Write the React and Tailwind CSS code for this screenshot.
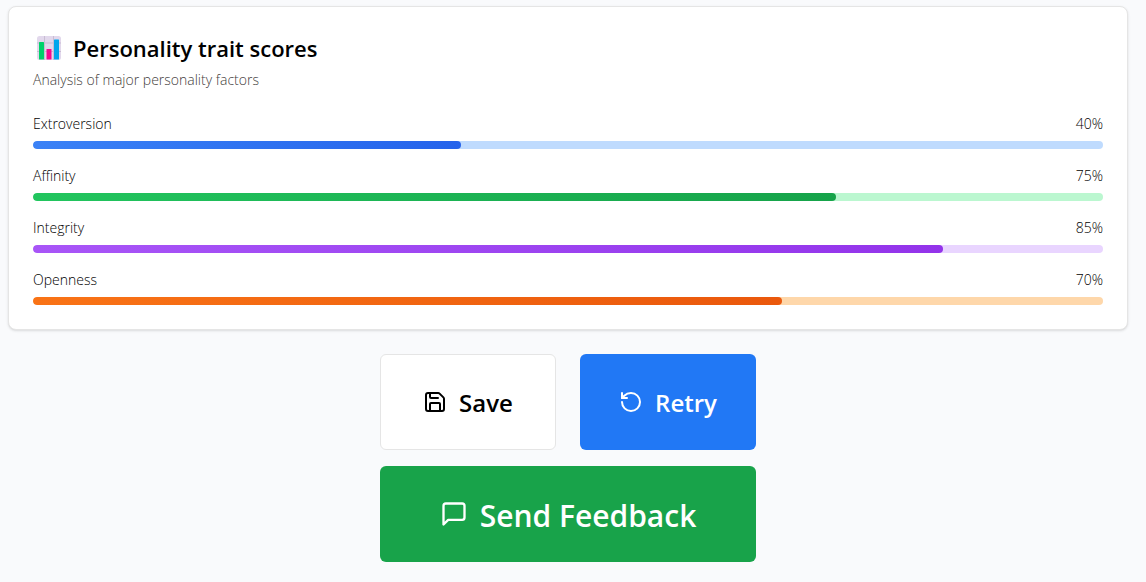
import { RotateCcw, Save } from "lucide-react";

const traits = [
  { name: "Extroversion", score: 40, track: "bg-[#bfdbfe]", fill: "bg-linear-to-r from-[#3b82f6] to-[#2563eb]" },
  { name: "Affinity", score: 75, track: "bg-[#bbf7d0]", fill: "bg-linear-to-r from-[#22c55e] to-[#16a34a]" },
  { name: "Integrity", score: 85, track: "bg-[#e9d5ff]", fill: "bg-linear-to-r from-[#a855f7] to-[#9333ea]" },
  { name: "Openness", score: 70, track: "bg-[#fed7aa]", fill: "bg-linear-to-r from-[#f97316] to-[#ea580c]" },
];

function ChartIcon() {
  return (
    <svg viewBox="0 0 24 24" className="size-6" aria-hidden="true">
      <rect width="24" height="24" rx="2.5" fill="#e2d8ec" />
      <path d="M7.5 0v24M16.5 0v24M0 7h24M0 15.5h24" stroke="#c8bdd3" strokeWidth="1" />
      <rect x="2" y="6" width="5" height="17.5" rx="0.5" fill="#00d26a" />
      <rect x="9.5" y="13" width="5" height="10.5" rx="0.5" fill="#f70a8d" />
      <rect x="17" y="3.5" width="5" height="20" rx="0.5" fill="#00a6ed" />
    </svg>
  );
}

function MessageIcon() {
  return (
    <svg
      viewBox="0 0 24 24"
      className="size-7"
      fill="none"
      stroke="currentColor"
      strokeWidth="2"
      strokeLinecap="round"
      strokeLinejoin="round"
      aria-hidden="true"
    >
      <path d="M21 15a2 2 0 0 1-2 2H7l-4 4V5a2 2 0 0 1 2-2h14a2 2 0 0 1 2 2z" />
    </svg>
  );
}

function TraitRow({ name, score, track, fill }) {
  return (
    <li className="flex flex-col gap-1.5">
      <div className="flex justify-between text-sm leading-[22px]">
        <span>{name}</span>
        <span>{score}%</span>
      </div>
      <div
        role="progressbar"
        aria-label={name}
        aria-valuenow={score}
        aria-valuemin={0}
        aria-valuemax={100}
        className={`h-2 overflow-hidden rounded-full ${track}`}
      >
        <div className={`h-full rounded-full ${fill}`} style={{ width: `${score}%` }} />
      </div>
    </li>
  );
}

export default function App() {
  return (
    <main className="min-h-screen bg-[#f9fafc] pt-1.5 pr-[18px] pb-5 pl-2 font-['Open_Sans','Noto_Sans',sans-serif] text-black">
      <section className="rounded-lg border border-[#e5e5e5] bg-white p-6 shadow-sm">
        <header className="flex flex-col gap-1 pb-[22px]">
          <h2 className="flex items-center gap-3 pl-1 text-[22px] leading-[34px] font-semibold">
            <ChartIcon />
            Personality trait scores
          </h2>
          <p className="text-sm leading-[22px] font-light text-[#44403c]">Analysis of major personality factors</p>
        </header>
        <ul className="flex flex-col gap-4 font-light">
          {traits.map((trait) => (
            <TraitRow key={trait.name} {...trait} />
          ))}
        </ul>
      </section>

      <div className="mx-auto mt-6 grid max-w-[376px] grid-cols-2 gap-x-6 gap-y-4 font-semibold">
        <button
          type="button"
          className="flex h-24 items-center justify-center gap-3 rounded-md border border-[#e5e5e5] bg-white text-2xl"
        >
          <Save size={24} aria-hidden="true" />
          <span className="pt-0.5">Save</span>
        </button>
        <button
          type="button"
          className="flex h-24 items-center justify-center gap-3 rounded-md bg-[#2178f5] text-2xl text-white"
        >
          <RotateCcw size={24} aria-hidden="true" />
          <span className="pt-0.5">Retry</span>
        </button>
        <button
          type="button"
          className="col-span-2 flex h-24 items-center justify-center gap-3 rounded-md bg-[#18a34a] text-3xl text-white"
        >
          <MessageIcon />
          <span className="pt-1">Send Feedback</span>
        </button>
      </div>
    </main>
  );
}
